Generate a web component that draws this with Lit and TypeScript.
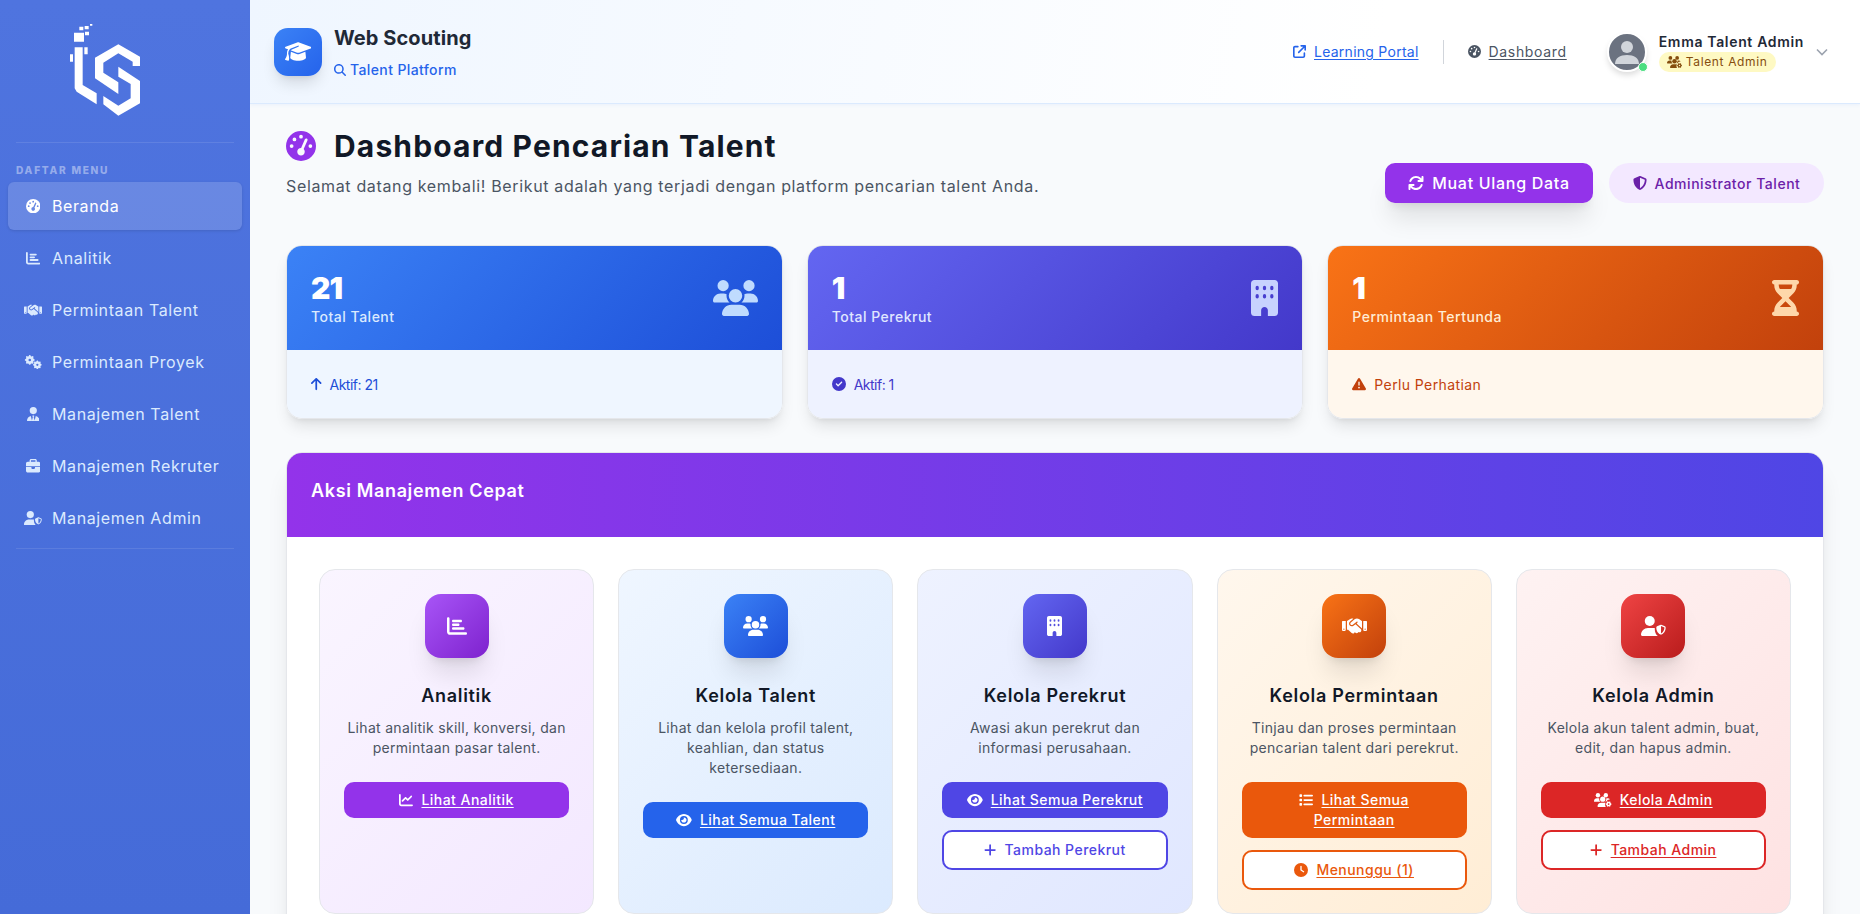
import { LitElement, html, css, svg } from "lit";
import { customElement } from "lit/decorators.js";

type Ic = { vb: string; c: unknown };
const p = (vb: string, d: string): Ic => ({ vb, c: svg`<path d=${d}/>` });

function gear(cx: number, cy: number, r: number, teeth = 8, hole = 0.26) {
  const pts: string[] = [];
  const n = teeth * 4;
  for (let i = 0; i < n; i++) {
    const a = ((i - 0.5) / n) * Math.PI * 2;
    const rad = i % 4 < 2 ? r : r * 0.8;
    pts.push(`${(cx + rad * Math.cos(a)).toFixed(1)} ${(cy + rad * Math.sin(a)).toFixed(1)}`);
  }
  const h = r * hole;
  return `M${pts.join("L")}Z M${cx - h} ${cy}a${h} ${h} 0 1 0 ${2 * h} 0a${h} ${h} 0 1 0 ${-2 * h} 0Z`;
}

const shield = "M256 0c4.6 0 9.2 1 13.4 2.9L457.7 82.8c22 9.3 38.4 31 38.3 57.2c-.5 99.2-41.3 280.7-213.6 363.2c-16.7 8-36.1 8-52.8 0C57.3 420.7 16.5 239.2 16 140c-.1-26.2 16.3-47.9 38.3-57.2L242.7 2.9C246.8 1 251.4 0 256 0zm0 66.8V444.8C394 378 431.1 230.1 432 141.4L256 66.8l0 0z";

const I = {
  gauge: p("0 0 512 512", "M0 256a256 256 0 1 1 512 0A256 256 0 1 1 0 256zM288 96a32 32 0 1 0 -64 0 32 32 0 1 0 64 0zM256 416c35.3 0 64-28.7 64-64c0-17.4-6.9-33.1-18.1-44.6L366 161.7c5.3-12.1-.2-26.3-12.3-31.6s-26.3 .2-31.6 12.3L257.9 288c-.6 0-1.3 0-1.9 0c-35.3 0-64 28.7-64 64s28.7 64 64 64zM176 144a32 32 0 1 0 -64 0 32 32 0 1 0 64 0zM96 288a32 32 0 1 0 0-64 32 32 0 1 0 0 64zm352-32a32 32 0 1 0 -64 0 32 32 0 1 0 64 0z"),
  bar: p("0 0 512 512", "M32 32c17.7 0 32 14.3 32 32V400c0 8.8 7.2 16 16 16H480c17.7 0 32 14.3 32 32s-14.3 32-32 32H80c-44.2 0-80-35.8-80-80V64C0 46.3 14.3 32 32 32zm96 96c0-17.7 14.3-32 32-32l192 0c17.7 0 32 14.3 32 32s-14.3 32-32 32l-192 0c-17.7 0-32-14.3-32-32zm32 64H288c17.7 0 32 14.3 32 32s-14.3 32-32 32H160c-17.7 0-32-14.3-32-32s14.3-32 32-32zm0 96H416c17.7 0 32 14.3 32 32s-14.3 32-32 32H160c-17.7 0-32-14.3-32-32s14.3-32 32-32z"),
  line: p("0 0 512 512", "M64 64c0-17.7-14.3-32-32-32S0 46.3 0 64V400c0 44.2 35.8 80 80 80H480c17.7 0 32-14.3 32-32s-14.3-32-32-32H80c-8.8 0-16-7.2-16-16V64zm406.6 86.6c12.5-12.5 12.5-32.8 0-45.3s-32.8-12.5-45.3 0L320 210.7l-57.4-57.4c-12.5-12.5-32.8-12.5-45.3 0l-112 112c-12.5 12.5-12.5 32.8 0 45.3s32.8 12.5 45.3 0L240 221.3l57.4 57.4c12.5 12.5 32.8 12.5 45.3 0l128-128z"),
  hands: p("0 0 640 512", "M323.4 85.2l-96.8 78.4c-16.1 13-19.2 36.4-7 53.1c12.9 17.8 38 21.3 55.3 7.8l99.3-77.2c7-5.4 17-4.2 22.5 2.8s4.2 17-2.8 22.5l-20.9 16.2L512 316.8V128h-.7l-3.9-2.5L434.8 79c-15.3-9.8-33.2-15-51.4-15c-21.8 0-43 7.5-60 21.2zm22.8 124.4l-51.7 40.2C263 274.4 217.3 268 193.7 235.6c-22.2-30.5-16.6-73.1 12.7-96.8l83.2-67.3c-11.6-4.9-24.1-7.4-36.8-7.4C234 64 215.7 69.6 200 80l-72 48V352h28.2l91.4 83.4c19.6 17.9 49.9 16.5 67.8-3.1c5.5-6.1 9.2-13.2 11.1-20.6l17 15.6c19.5 17.9 49.9 16.6 67.8-2.9c4.5-4.9 7.8-10.6 9.9-16.5c19.4 13 45.8 10.3 62.1-7.5c17.9-19.5 16.6-49.9-2.9-67.8l-134.2-123zM16 128c-8.8 0-16 7.2-16 16V352c0 17.7 14.3 32 32 32H64c17.7 0 32-14.3 32-32V128H16zM48 320a16 16 0 1 1 0 32 16 16 0 1 1 0-32zM544 128V352c0 17.7 14.3 32 32 32h32c17.7 0 32-14.3 32-32V144c0-8.8-7.2-16-16-16H544zm32 208a16 16 0 1 1 32 0 16 16 0 1 1 -32 0z"),
  gears: { vb: "0 0 640 512", c: svg`<path fill-rule="evenodd" d=${gear(205, 175, 175) + gear(475, 350, 155)}/>` } as Ic,
  tie: p("0 0 448 512", "M96 128a128 128 0 1 0 256 0A128 128 0 1 0 96 128zm94.5 200.2l18.6 31L175.8 483.1l-36-146.9c-2-8.1-9.8-13.4-17.9-11.3C51.9 342.4 0 405.8 0 481.3c0 17 13.8 30.7 30.7 30.7H162.5c0 0 0 0 .1 0H168 280h5.5c0 0 0 0 .1 0H417.3c17 0 30.7-13.8 30.7-30.7c0-75.5-51.9-138.9-121.9-156.4c-8.1-2-15.9 3.3-17.9 11.3l-36 146.9L238.9 359.2l18.6-31c6.4-10.7-1.3-24.2-13.7-24.2H224 204.3c-12.4 0-20.1 13.6-13.7 24.2z"),
  brief: p("0 0 512 512", "M184 48H328c4.4 0 8 3.6 8 8V96H176V56c0-4.4 3.6-8 8-8zm-56 8V96H64C28.7 96 0 124.7 0 160v96H192 320 512V160c0-35.3-28.7-64-64-64H384V56c0-30.9-25.1-56-56-56H184c-30.9 0-56 25.1-56 56zM512 288H320v32c0 17.7-14.3 32-32 32H224c-17.7 0-32-14.3-32-32V288H0V416c0 35.3 28.7 64 64 64H448c35.3 0 64-28.7 64-64V288z"),
  userShield: {
    vb: "0 0 640 512",
    c: svg`<circle cx="224" cy="128" r="128"/><path d="M178.3 304C79.8 304 0 383.8 0 482.3C0 498.7 13.3 512 29.7 512H432C385 480 352 420 352 332V320C352 313 353 308 354 304Z"/><path transform="translate(384 224) scale(.5)" d=${shield}/>`,
  } as Ic,
  users: p("0 0 640 512", "M144 0a80 80 0 1 1 0 160A80 80 0 1 1 144 0zM512 0a80 80 0 1 1 0 160A80 80 0 1 1 512 0zM0 298.7C0 239.8 47.8 192 106.7 192h42.7c15.9 0 31 3.5 44.6 9.7c-1.3 7.2-1.9 14.7-1.9 22.3c0 38.2 16.8 72.5 43.3 96c-.2 0-.4 0-.7 0H21.3C9.6 320 0 310.4 0 298.7zM405.3 320c-.2 0-.4 0-.7 0c26.6-23.5 43.3-57.8 43.3-96c0-7.6-.7-15-1.9-22.3c13.6-6.3 28.7-9.7 44.6-9.7h42.7C592.2 192 640 239.8 640 298.7c0 11.8-9.6 21.3-21.3 21.3H405.3zM224 224a96 96 0 1 1 192 0 96 96 0 1 1 -192 0zM128 485.3C128 411.7 187.7 352 261.3 352H378.7C452.3 352 512 411.7 512 485.3c0 14.7-11.9 26.7-26.7 26.7H154.7c-14.7 0-26.7-11.9-26.7-26.7z"),
  usersGear: {
    vb: "0 0 640 512",
    c: svg`<circle cx="144" cy="80" r="80"/><circle cx="432" cy="80" r="80"/><path d="M0 298.7C0 239.8 47.8 192 106.7 192h42.7c15.9 0 31 3.5 44.6 9.7c-1.3 7.2-1.9 14.7-1.9 22.3c0 38.2 16.8 72.5 43.3 96H21.3C9.6 320 0 310.4 0 298.7z"/><path d="M405 320c26-23 43-58 43-96c0-8-1-15-2-22c14-6 29-10 45-10h16c30 0 57 12 76 32c-18 0-36 8-48 22c-30-4-60 20-66 54Z"/><circle cx="320" cy="224" r="96"/><path d="M128 485.3C128 411.7 187.7 352 261.3 352H378.7C396 352 410 355 424 361C398 410 398 460 430 512H154.7c-14.7 0-26.7-11.9-26.7-26.7z"/><path fill-rule="evenodd" d=${gear(535, 405, 105, 6, 0.3)}/>`,
  } as Ic,
  cap: p("0 0 640 512", "M320 32c-8.1 0-16.1 1.4-23.7 4.1L15.8 137.4C6.3 140.9 0 149.9 0 160s6.3 19.1 15.8 22.6l57.9 20.9C57.3 229.3 48 259.8 48 291.9v28.1c0 28.4-10.8 57.7-22.3 80.8c-6.5 13-13.9 25.8-22.5 37.6C0 442.7-.9 448.3 .9 453.4s6 8.9 11.2 10.2l64 16c4.2 1.1 8.7 .3 12.4-2s6.3-6.1 7.1-10.4c8.6-42.8 4.3-81.2-2.1-108.7C90.3 344.3 86 329.8 80 316.5V291.9c0-30.2 10.2-58.7 27.9-81.5c12.9-15.5 29.6-28 49.2-35.7l157-61.7c8.2-3.2 17.5 .8 20.7 9s-.8 17.5-9 20.7l-157 61.7c-12.4 4.9-23.3 12.4-32.2 21.6l159.6 57.6c7.6 2.7 15.6 4.1 23.7 4.1s16.1-1.4 23.7-4.1L624.2 182.6c9.5-3.4 15.8-12.5 15.8-22.6s-6.3-19.1-15.8-22.6L343.7 36.1C336.1 33.4 328.1 32 320 32zM128 408c0 35.3 86 72 192 72s192-36.7 192-72L496.7 262.6 354.5 314c-11.1 4-22.8 6-34.5 6s-23.5-2-34.5-6L143.3 262.6 128 408z"),
  search: p("0 0 512 512", "M416 208c0 45.9-14.9 88.3-40 122.7L502.6 457.4c12.5 12.5 12.5 32.8 0 45.3s-32.8 12.5-45.3 0L330.7 376c-34.4 25.2-76.8 40-122.7 40C93.1 416 0 322.9 0 208S93.1 0 208 0S416 93.1 416 208zM208 352a144 144 0 1 0 0-288 144 144 0 1 0 0 288z"),
  ext: p("0 0 512 512", "M320 0c-17.7 0-32 14.3-32 32s14.3 32 32 32h82.7L201.4 265.4c-12.5 12.5-12.5 32.8 0 45.3s32.8 12.5 45.3 0L448 109.3V192c0 17.7 14.3 32 32 32s32-14.3 32-32V32c0-17.7-14.3-32-32-32H320zM80 32C35.8 32 0 67.8 0 112V432c0 44.2 35.8 80 80 80H400c44.2 0 80-35.8 80-80V320c0-17.7-14.3-32-32-32s-32 14.3-32 32V432c0 8.8-7.2 16-16 16H80c-8.8 0-16-7.2-16-16V112c0-8.8 7.2-16 16-16H192c17.7 0 32-14.3 32-32s-14.3-32-32-32H80z"),
  sync: p("0 0 512 512", "M105.1 202.6c7.7-21.8 20.2-42.3 37.8-59.8c62.5-62.5 163.8-62.5 226.3 0L386.3 160H336c-17.7 0-32 14.3-32 32s14.3 32 32 32H463.5c0 0 0 0 0 0h.4c17.7 0 32-14.3 32-32V64c0-17.7-14.3-32-32-32s-32 14.3-32 32v51.2L414.4 97.6c-87.5-87.5-229.3-87.5-316.8 0C73.2 122 55.6 150.7 44.8 181.4c-5.9 16.7 2.9 34.9 19.5 40.8s34.9-2.9 40.8-19.5zM39 289.3c-5 1.5-9.8 4.2-13.7 8.2c-4 4-6.7 8.8-8.1 14c-.3 1.2-.6 2.5-.8 3.8c-.3 1.7-.4 3.4-.4 5.1V448c0 17.7 14.3 32 32 32s32-14.3 32-32V396.9l17.6 17.5 0 0c87.5 87.4 229.3 87.4 316.7 0c24.4-24.4 42.1-53.1 52.9-83.7c5.9-16.7-2.9-34.9-19.5-40.8s-34.9 2.9-40.8 19.5c-7.7 21.8-20.2 42.3-37.8 59.8c-62.5 62.5-163.8 62.5-226.3 0l-.1-.1L125.6 352H176c17.7 0 32-14.3 32-32s-14.3-32-32-32H48.4c-1.6 0-3.2 .1-4.8 .3s-3.1 .5-4.6 1z"),
  shield: p("0 0 512 512", shield),
  up: p("0 0 384 512", "M214.6 41.4c-12.5-12.5-32.8-12.5-45.3 0l-160 160c-12.5 12.5-12.5 32.8 0 45.3s32.8 12.5 45.3 0L160 141.2V448c0 17.7 14.3 32 32 32s32-14.3 32-32V141.2L329.4 246.6c12.5 12.5 32.8 12.5 45.3 0s12.5-32.8 0-45.3l-160-160z"),
  check: p("0 0 512 512", "M256 512A256 256 0 1 0 256 0a256 256 0 1 0 0 512zM369 209L241 337c-9.4 9.4-24.6 9.4-33.9 0l-64-64c-9.4-9.4-9.4-24.6 0-33.9s24.6-9.4 33.9 0l47 47L335 175c9.4-9.4 24.6-9.4 33.9 0s9.4 24.6 0 33.9z"),
  warn: p("0 0 512 512", "M256 32c14.2 0 27.3 7.5 34.5 19.8l216 368c7.3 12.4 7.3 27.7 .2 40.1S486.3 480 472 480H40c-14.3 0-27.6-7.7-34.7-20.1s-7-27.8 .2-40.1l216-368C228.7 39.5 241.8 32 256 32zm0 128c-13.3 0-24 10.7-24 24V296c0 13.3 10.7 24 24 24s24-10.7 24-24V184c0-13.3-10.7-24-24-24zm32 224a32 32 0 1 0 -64 0 32 32 0 1 0 64 0z"),
  hourglass: p("0 0 384 512", "M32 0C14.3 0 0 14.3 0 32S14.3 64 32 64V75c0 42.4 16.9 83.1 46.9 113.1L146.7 256 78.9 323.9C48.9 353.9 32 394.6 32 437v11c-17.7 0-32 14.3-32 32s14.3 32 32 32H64 320h32c17.7 0 32-14.3 32-32s-14.3-32-32-32V437c0-42.4-16.9-83.1-46.9-113.1L237.3 256l67.9-67.9c30-30 46.9-70.7 46.9-113.1V64c17.7 0 32-14.3 32-32s-14.3-32-32-32H320 64 32zM96 75V64H288V75c0 19-5.6 37.4-16 53H112c-10.3-15.6-16-34-16-53zm16 309c3.5-5.3 7.6-10.3 12.1-14.9L192 301.3l67.9 67.9c4.6 4.6 8.6 9.6 12.1 14.9H112z"),
  eye: p("0 0 576 512", "M288 32c-80.8 0-145.5 36.8-192.6 80.6C48.6 156 17.3 208 2.5 243.7c-3.3 7.9-3.3 16.7 0 24.6C17.3 304 48.6 356 95.4 399.4C142.5 443.2 207.2 480 288 480s145.5-36.8 192.6-80.6c46.8-43.5 78.1-95.4 93-131.1c3.3-7.9 3.3-16.7 0-24.6c-14.9-35.7-46.2-87.7-93-131.1C433.5 68.8 368.8 32 288 32zM144 256a144 144 0 1 1 288 0 144 144 0 1 1 -288 0zm144-64c0 35.3-28.7 64-64 64c-7.1 0-13.9-1.2-20.3-3.3c-5.5-1.8-11.9 1.6-11.7 7.4c.3 6.9 1.3 13.8 3.2 20.7c13.7 51.2 66.4 81.6 117.6 67.9s81.6-66.4 67.9-117.6c-11.1-41.5-47.8-69.4-88.6-71.1c-5.8-.2-9.2 6.1-7.4 11.7c2.1 6.4 3.3 13.2 3.3 20.3z"),
  list: p("0 0 512 512", "M40 48C26.7 48 16 58.7 16 72v48c0 13.3 10.7 24 24 24H88c13.3 0 24-10.7 24-24V72c0-13.3-10.7-24-24-24H40zM192 64c-17.7 0-32 14.3-32 32s14.3 32 32 32H480c17.7 0 32-14.3 32-32s-14.3-32-32-32H192zm0 160c-17.7 0-32 14.3-32 32s14.3 32 32 32H480c17.7 0 32-14.3 32-32s-14.3-32-32-32H192zm0 160c-17.7 0-32 14.3-32 32s14.3 32 32 32H480c17.7 0 32-14.3 32-32s-14.3-32-32-32H192zM16 232v48c0 13.3 10.7 24 24 24H88c13.3 0 24-10.7 24-24V232c0-13.3-10.7-24-24-24H40c-13.3 0-24 10.7-24 24zM40 368c-13.3 0-24 10.7-24 24v48c0 13.3 10.7 24 24 24H88c13.3 0 24-10.7 24-24V392c0-13.3-10.7-24-24-24H40z"),
  clock: p("0 0 512 512", "M256 0a256 256 0 1 1 0 512A256 256 0 1 1 256 0zM232 120V256c0 8 4 15.5 10.7 20l96 64c11 7.4 25.9 4.4 33.3-6.7s4.4-25.9-6.7-33.3L280 243.2V120c0-13.3-10.7-24-24-24s-24 10.7-24 24z"),
  plus: p("0 0 448 512", "M256 80c0-17.7-14.3-32-32-32s-32 14.3-32 32V224H48c-17.7 0-32 14.3-32 32s14.3 32 32 32H192V432c0 17.7 14.3 32 32 32s32-14.3 32-32V288H400c17.7 0 32-14.3 32-32s-14.3-32-32-32H256V80z"),
  building: {
    vb: "0 0 384 512",
    c: svg`<path fill-rule="evenodd" d="M48 0C21.5 0 0 21.5 0 48V464c0 26.5 21.5 48 48 48h96V432c0-26.5 21.5-48 48-48s48 21.5 48 48v80h96c26.5 0 48-21.5 48-48V48c0-26.5-21.5-48-48-48H48zM64 112a24 32 0 1 0 48 0a24 32 0 1 0 -48 0zM168 112a24 32 0 1 0 48 0a24 32 0 1 0 -48 0zM272 112a24 32 0 1 0 48 0a24 32 0 1 0 -48 0zM64 232a24 32 0 1 0 48 0a24 32 0 1 0 -48 0zM168 232a24 32 0 1 0 48 0a24 32 0 1 0 -48 0zM272 232a24 32 0 1 0 48 0a24 32 0 1 0 -48 0z"/>`,
  } as Ic,
};

const icon = (i: Ic, cls = "") =>
  html`<svg class="i ${cls}" viewBox=${i.vb} fill="currentColor" aria-hidden="true">${i.c}</svg>`;

const menu: [Ic, string][] = [
  [I.gauge, "Beranda"],
  [I.bar, "Analitik"],
  [I.hands, "Permintaan Talent"],
  [I.gears, "Permintaan Proyek"],
  [I.tie, "Manajemen Talent"],
  [I.brief, "Manajemen Rekruter"],
  [I.userShield, "Manajemen Admin"],
];

const stats = [
  { cls: "blue", n: "21", label: "Total Talent", ic: I.users, fic: I.up, foot: "Aktif: 21" },
  { cls: "indigo", n: "1", label: "Total Perekrut", ic: I.building, fic: I.check, foot: "Aktif: 1" },
  { cls: "orange", n: "1", label: "Permintaan Tertunda", ic: I.hourglass, fic: I.warn, foot: "Perlu Perhatian" },
];

type Btn = { ic: Ic; t: unknown; u: boolean };
const actions: { cls: string; ic: Ic; title: string; desc: unknown; solid: Btn; outline?: Btn }[] = [
  { cls: "purple", ic: I.bar, title: "Analitik",
    desc: html`Lihat analitik skill, konversi, dan<br />permintaan pasar talent.`,
    solid: { ic: I.line, t: "Lihat Analitik", u: true } },
  { cls: "blue", ic: I.users, title: "Kelola Talent",
    desc: html`Lihat dan kelola profil talent,<br />keahlian, dan status<br />ketersediaan.`,
    solid: { ic: I.eye, t: "Lihat Semua Talent", u: true } },
  { cls: "indigo", ic: I.building, title: "Kelola Perekrut",
    desc: html`Awasi akun perekrut dan<br />informasi perusahaan.`,
    solid: { ic: I.eye, t: "Lihat Semua Perekrut", u: true },
    outline: { ic: I.plus, t: "Tambah Perekrut", u: false } },
  { cls: "orange", ic: I.hands, title: "Kelola Permintaan",
    desc: html`Tinjau dan proses permintaan<br />pencarian talent dari perekrut.`,
    solid: { ic: I.list, t: html`Lihat Semua<br />Permintaan`, u: true },
    outline: { ic: I.clock, t: "Menunggu (1)", u: true } },
  { cls: "red", ic: I.userShield, title: "Kelola Admin",
    desc: html`Kelola akun talent admin, buat,<br />edit, dan hapus admin.`,
    solid: { ic: I.usersGear, t: "Kelola Admin", u: true },
    outline: { ic: I.plus, t: "Tambah Admin", u: true } },
];

@customElement("app-root")
export class AppRoot extends LitElement {
  static styles = css`
    :host {
      display: flex;
      width: 100%;
      height: 914px;
      overflow: hidden;
      font-family: Inter, "Noto Sans", sans-serif;
      color: #111827;
      background: #f8fafc;
    }
    .i { height: 1em; width: auto; flex: none; display: block; }
    .side {
      width: 250px;
      flex: none;
      background: linear-gradient(180deg, #4f74df 0%, #456bd8 100%);
      display: flex;
      flex-direction: column;
    }
    .logo { width: 130px; height: 120px; margin: 10px 0 0 40px; display: block; flex: none; }
    .hr { height: 1px; background: rgba(255,255,255,.1); margin: 12px 16px 0; flex: none; }
    .menu-label {
      margin: 21px 16px 6px;
      font-size: 10.2px;
      line-height: 12px;
      font-weight: 800;
      letter-spacing: 1.7px;
      color: rgba(255,255,255,.42);
    }
    .items { display: flex; flex-direction: column; gap: 4px; padding: 0 8px; }
    .item {
      height: 48px;
      display: flex;
      align-items: center;
      padding-left: 16px;
      border-radius: 6px;
      font-size: 16px;
      letter-spacing: .6px;
      color: #dbeafe;
    }
    .item.on { background: rgba(255,255,255,.16); color: #fff; box-shadow: 0 1px 3px rgba(0,0,0,.12); }
    .ibox { width: 18px; margin-right: 10px; display: flex; justify-content: center; font-size: 14.4px; }
    .side .hr2 { height: 1px; background: rgba(255,255,255,.1); margin: 6px 16px 0; }

    .main { flex: 1; min-width: 0; display: flex; flex-direction: column; overflow: hidden; }
    .top {
      height: 104px;
      flex: none;
      box-sizing: border-box;
      background: linear-gradient(100deg, #eff6ff 0%, #ffffff 70%);
      border-bottom: 1px solid #dbeafe;
      box-shadow: 0 1px 4px rgba(59,130,246,.08);
      display: flex;
      align-items: center;
      padding: 0 31px 0 24px;
      position: relative;
      z-index: 2;
    }
    .brand { width: 48px; height: 48px; border-radius: 14px; background: linear-gradient(135deg, #3b82f6, #2563eb);
      color: #fff; display: flex; align-items: center; justify-content: center; font-size: 21px;
      box-shadow: 0 10px 15px -3px rgba(0,0,0,.12), 0 4px 6px -4px rgba(0,0,0,.1); }
    .brand-t { margin-left: 12px; display: flex; flex-direction: column; gap: 8px; }
    .brand-name { font-size: 20px; line-height: 28px; font-weight: 700; color: #1f2937; letter-spacing: .08px; }
    .brand-sub { display: flex; align-items: center; gap: 4px; font-size: 14px; line-height: 20px; font-weight: 500; color: #2563eb; letter-spacing: .38px; }
    .brand-sub .i { font-size: 12px; }
    .spacer { flex: 1; }
    .link { display: flex; align-items: center; gap: 8px; font-size: 14px; font-weight: 400; text-decoration: underline; text-underline-offset: 2px; }
    .link .i { font-size: 13px; }
    .link.b { color: #2563eb; letter-spacing: .26px; }
    .link.g { color: #4b5563; letter-spacing: .66px; }
    .vr { width: 1px; height: 24px; background: #d1d5db; margin: 0 24px; }
    .user { display: flex; align-items: center; margin-left: 40px; }
    .avatar { width: 36px; height: 36px; border: 2px solid #fff; border-radius: 50%; background: #6b7280; position: relative;
      box-shadow: 0 4px 6px -1px rgba(0,0,0,.15); overflow: visible; }
    .avatar svg { width: 36px; height: 36px; display: block; border-radius: 50%; }
    .dot { position: absolute; right: -3px; bottom: -2px; width: 10px; height: 10px; border-radius: 50%; background: #4ade80; border: 1px solid #fff; box-sizing: border-box; }
    .who { margin-left: 12px; display: flex; flex-direction: column; align-items: flex-start; }
    .who-n { font-size: 14px; line-height: 20px; font-weight: 600; color: #1f2937; letter-spacing: .66px; }
    .who-b { display: flex; align-items: center; gap: 4px; height: 20px; padding: 0 8px; border-radius: 10px; background: #fef9c3; color: #854d0e; font-size: 12px; letter-spacing: .65px; }
    .who-b .i { font-size: 12px; }
    .chev { width: 14px; height: 14px; margin-left: 11px; fill: none; stroke: #9ca3af; stroke-width: 1.6; }

    .page { padding: 27px 36px 0; flex: 1; }
    .ph { display: flex; justify-content: space-between; align-items: flex-start; height: 114px; }
    .ph-t { display: flex; align-items: center; height: 30px; }
    .ph-t .i { font-size: 30px; color: #9333ea; margin-right: 18px; }
    h1 { margin: 0; font-size: 30px; line-height: 36px; font-weight: 700; color: #111827; letter-spacing: 1.15px; }
    .ph-s { margin: 13px 0 0; font-size: 16px; line-height: 24px; color: #4b5563; letter-spacing: .65px; }
    .ph-r { display: flex; gap: 16px; margin-top: 32px; }
    .reload { height: 40px; width: 208px; border-radius: 10px; background: #9333ea; color: #fff; display: flex; align-items: center; justify-content: center; gap: 8px;
      font-size: 16px; font-weight: 500; letter-spacing: .7px; box-shadow: 0 20px 25px -5px rgba(0,0,0,.1), 0 8px 10px -6px rgba(0,0,0,.1); }
    .reload .i { font-size: 16px; }
    .adm { height: 40px; width: 215px; border-radius: 20px; background: #f3e8ff; color: #6b21a8; display: flex; align-items: center; justify-content: center; gap: 8px; font-size: 14px; font-weight: 500; letter-spacing: .53px; }
    .adm .i { font-size: 14px; }

    .stats { display: grid; grid-template-columns: repeat(3, 1fr); gap: 24px; }
    .stat { border-radius: 16px; overflow: hidden; box-shadow: 0 10px 15px -3px rgba(0,0,0,.1), 0 4px 6px -4px rgba(0,0,0,.1); border: 1px solid #e5e7eb; }
    .stat-h { height: 104px; box-sizing: border-box; padding: 24px; display: flex; justify-content: space-between; align-items: center; color: #fff; }
    .stat-n { font-size: 30px; line-height: 36px; font-weight: 900; letter-spacing: -1px; margin-top: 1px; }
    .stat-l { font-size: 14px; line-height: 20px; font-weight: 500; margin-top: 1px; letter-spacing: .5px; }
    .stat-h .i { font-size: 36px; }
    .stat-f { height: 68px; display: flex; align-items: center; gap: 8px; padding: 0 24px; font-size: 14px; letter-spacing: -.5px; }
    .stat-f .i { font-size: 14px; }
    .stat.blue .stat-h { background: linear-gradient(135deg, #3b82f6, #1d4ed8); }
    .stat.blue .stat-l { color: #dbeafe; }
    .stat.blue .stat-h .i { color: #bfdbfe; }
    .stat.blue .stat-f { background: #eff6ff; color: #1d4ed8; }
    .stat.indigo .stat-h { background: linear-gradient(135deg, #6366f1, #4338ca); }
    .stat.indigo .stat-l { color: #e0e7ff; }
    .stat.indigo .stat-h .i { color: #c7d2fe; }
    .stat.indigo .stat-f { background: #eef2ff; color: #4338ca; }
    .stat.orange .stat-h { background: linear-gradient(135deg, #f97316, #c2410c); }
    .stat.orange .stat-l { color: #ffedd5; }
    .stat.orange .stat-h .i { color: #fed7aa; }
    .stat.orange .stat-f { background: #fff7ed; color: #c2410c; letter-spacing: .4px; }

    .panel { margin-top: 33px; background: #fff; border: 1px solid #e5e7eb; border-radius: 16px 16px 0 0; overflow: hidden; box-shadow: 0 20px 25px -5px rgba(0,0,0,.1), 0 8px 10px -6px rgba(0,0,0,.1); }
    .panel-h { height: 84px; box-sizing: border-box; padding: 0 24px 10px; display: flex; align-items: center; background: linear-gradient(90deg, #9333ea, #4f46e5); color: #fff; font-size: 18px; font-weight: 600; letter-spacing: .65px; }
    .panel-b { padding: 32px; display: grid; grid-template-columns: repeat(5, 1fr); gap: 24px; }
    .act { height: 345px; box-sizing: border-box; border: 1px solid #e5e7eb; border-radius: 16px; padding: 24px; display: flex; flex-direction: column; align-items: center; text-align: center; }
    .act > * { flex: none; }
    .act-i { width: 64px; height: 64px; border-radius: 16px; color: #fff; display: flex; align-items: center; justify-content: center; font-size: 20px;
      box-shadow: 0 20px 25px -5px rgba(0,0,0,.1), 0 8px 10px -6px rgba(0,0,0,.1); }
    .act h3 { margin: 24px 0 0; font-size: 18px; line-height: 28px; font-weight: 600; color: #111827; letter-spacing: .7px; }
    .act p { margin: 8px 0 0; font-size: 14px; line-height: 20px; color: #4b5563; letter-spacing: .3px; }
    .btns { width: 100%; margin-top: 24px; display: flex; flex-direction: column; gap: 12px; }
    .btn { box-sizing: border-box; width: 100%; min-height: 36px; padding: 8px 16px; border-radius: 10px; font-size: 14px; line-height: 20px; font-weight: 500; letter-spacing: .46px; color: #fff; display: block; text-align: center; }
    .btn .i { display: inline-block; vertical-align: -2px; margin-right: 8px; font-size: 14px; }
    .u { text-decoration: underline; text-underline-offset: 2px; }
    .btn.o { background: #fff; border: 2px solid; min-height: 40px; }
    .act.purple { background: linear-gradient(135deg, #faf5ff, #f3e8ff); }
    .act.purple .act-i { background: linear-gradient(135deg, #a855f7, #7e22ce); }
    .act.purple .btn { background: #9333ea; }
    .act.blue { background: linear-gradient(135deg, #eff6ff, #dbeafe); }
    .act.blue .act-i { background: linear-gradient(135deg, #3b82f6, #1d4ed8); }
    .act.blue .btn { background: #2563eb; }
    .act.indigo { background: linear-gradient(135deg, #eef2ff, #e0e7ff); }
    .act.indigo .act-i { background: linear-gradient(135deg, #6366f1, #4338ca); }
    .act.indigo .btn { background: #4f46e5; }
    .act.indigo .btn.o { background: #fff; color: #4f46e5; border-color: #4f46e5; }
    .act.orange { background: linear-gradient(135deg, #fff7ed, #ffedd5); }
    .act.orange .act-i { background: linear-gradient(135deg, #f97316, #c2410c); }
    .act.orange .btn { background: #ea580c; }
    .act.orange .btn.o { background: #fff; color: #ea580c; border-color: #ea580c; }
    .act.red { background: linear-gradient(135deg, #fef2f2, #fee2e2); }
    .act.red .act-i { background: linear-gradient(135deg, #ef4444, #b91c1c); }
    .act.red .btn { background: #dc2626; }
    .act.red .btn.o { background: #fff; color: #dc2626; border-color: #dc2626; }
  `;

  private logo() {
    return html`<svg class="logo" viewBox="0 0 390 360" fill="#fff" aria-label="Logo">
      <path d="M102 68h30v27h-30zM118 50h12v11h-12zM134 48h12v10h-12zM135 65h12v11h-12zM150 42h7v5h-7z" />
      <path d="M133 112h10v21h-10zM90 133h9v22h-9z" />
      <path d="M104 112h24v113l42 25v33l-60-38-6-10z" />
      <path d="M300 168v-28l-65-37-70 40v62l70 47v-35l-45-29v-30l45-28 43 25v13z" />
      <path d="M235 170v30l37 22v43l-37 22-45-29v25l45 34 65-37v-67z" />
    </svg>`;
  }

  private btn(b: Btn, o = false) {
    return html`<div class="btn ${o ? "o" : ""}">${icon(b.ic)}<span class=${b.u ? "u" : ""}>${b.t}</span></div>`;
  }

  render() {
    return html`
      <aside class="side">
        ${this.logo()}
        <div class="hr"></div>
        <div class="menu-label">DAFTAR MENU</div>
        <nav class="items">
          ${menu.map(([ic, t], i) => html`<div class="item ${i === 0 ? "on" : ""}"><span class="ibox">${icon(ic)}</span>${t}</div>`)}
        </nav>
        <div class="hr2"></div>
      </aside>
      <div class="main">
        <header class="top">
          <div class="brand">${icon(I.cap)}</div>
          <div class="brand-t">
            <div class="brand-name">Web Scouting</div>
            <div class="brand-sub">${icon(I.search)}Talent Platform</div>
          </div>
          <div class="spacer"></div>
          <div class="link b">${icon(I.ext)}<span>Learning Portal</span></div>
          <div class="vr"></div>
          <div class="link g">${icon(I.gauge)}<span>Dashboard</span></div>
          <div class="user">
            <div class="avatar">
              <svg viewBox="0 0 36 36"><circle cx="18" cy="13" r="6" fill="#d1d5db" /><path d="M6 30c0-6 5-9 12-9s12 3 12 9z" fill="#d1d5db" /></svg>
              <span class="dot"></span>
            </div>
            <div class="who">
              <div class="who-n">Emma Talent Admin</div>
              <div class="who-b">${icon(I.usersGear)}Talent Admin</div>
            </div>
            <svg class="chev" viewBox="0 0 14 14"><path d="M2 4.5l5 5 5-5" /></svg>
          </div>
        </header>
        <div class="page">
          <section class="ph">
            <div>
              <div class="ph-t">${icon(I.gauge)}<h1>Dashboard Pencarian Talent</h1></div>
              <p class="ph-s">Selamat datang kembali! Berikut adalah yang terjadi dengan platform pencarian talent Anda.</p>
            </div>
            <div class="ph-r">
              <div class="reload">${icon(I.sync)}Muat Ulang Data</div>
              <div class="adm">${icon(I.shield)}Administrator Talent</div>
            </div>
          </section>
          <section class="stats">
            ${stats.map((s) => html`<div class="stat ${s.cls}">
              <div class="stat-h">
                <div><div class="stat-n">${s.n}</div><div class="stat-l">${s.label}</div></div>
                ${icon(s.ic)}
              </div>
              <div class="stat-f">${icon(s.fic)}${s.foot}</div>
            </div>`)}
          </section>
          <section class="panel">
            <div class="panel-h">Aksi Manajemen Cepat</div>
            <div class="panel-b">
              ${actions.map((a) => html`<div class="act ${a.cls}">
                <div class="act-i">${icon(a.ic)}</div>
                <h3>${a.title}</h3>
                <p>${a.desc}</p>
                <div class="btns">${this.btn(a.solid)}${a.outline ? this.btn(a.outline, true) : ""}</div>
              </div>`)}
            </div>
          </section>
        </div>
      </div>
    `;
  }
}
